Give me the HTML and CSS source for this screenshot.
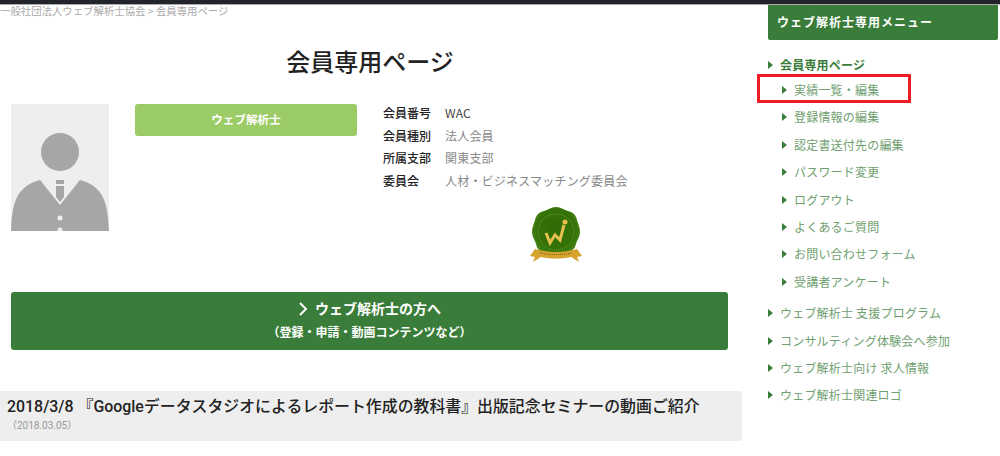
FILE: index.html
```html
<!DOCTYPE html>
<html lang="ja">
<head>
  <meta charset="UTF-8" />
  <title>会員専用ページ</title>
  <link rel="stylesheet" href="styles.css">
</head>
<body>
  <div class="topbar"></div>
  <div class="page">
    <div class="main">
      <p class="crumb">一般社団法人ウェブ解析士協会 &gt; 会員専用ページ</p>
      <h1>会員専用ページ</h1>

      <div class="profile">
        <svg class="photo" width="98" height="127" viewBox="0 0 98 127">
          <rect width="98" height="127" fill="#eeeeee"/>
          <circle cx="49" cy="48" r="19" fill="#a6a6a6"/>
          <path d="M0 127 C1 98 6 82 29 76 L49 101 L69 76 C92 82 97 98 98 127 Z" fill="#a6a6a6"/>
          <rect x="45" y="76" width="8" height="4" fill="#a6a6a6"/>
          <path d="M45 82 H53 V93 L49 98 L45 93 Z" fill="#a6a6a6"/>
          <circle cx="49" cy="114" r="2.500" fill="#eeeeee"/>
          <circle cx="49" cy="126" r="2.500" fill="#eeeeee"/>
        </svg>

        <div class="badge">ウェブ解析士</div>

        <div class="info">
          <table>
            <tr><th>会員番号</th><td>WAC</td></tr>
            <tr><th>会員種別</th><td>法人会員</td></tr>
            <tr><th>所属支部</th><td>関東支部</td></tr>
            <tr><th>委員会</th><td>人材・ビジネスマッチング委員会</td></tr>
          </table>
          <svg class="medal" width="54" height="56" viewBox="0 0 54 56">
            <defs>
              <radialGradient id="wax" cx="50%" cy="45%" r="55%">
                <stop offset="0" stop-color="#2f6a05"/>
                <stop offset="0.750" stop-color="#357308"/>
                <stop offset="1" stop-color="#4f8f1c"/>
              </radialGradient>
            </defs>
            <path d="M26 0 C31 0 34 3 38 4 C43 5 46 8 47 13 C48 17 50 20 50 25 C50 30 47 33 46 37 C45 42 41 45 36 46 C32 47 30 51 26 51 C22 51 19 47 15 46 C10 45 7 42 6 37 C5 33 2 30 2 25 C2 20 4 17 5 13 C6 8 9 5 14 4 C18 3 21 0 26 0 Z" fill="url(#wax)"/>
            <circle cx="26" cy="25" r="18" fill="none" stroke="#4c8a1a" stroke-width="1"/>
            <path d="M16 26 L20 36 L25 28 L30 33 L34 18" fill="none" stroke="#e6c04e" stroke-width="3"/>
            <circle cx="35" cy="15" r="2.500" fill="#e6c04e"/>
            <path d="M0 49 L5 42 C18 46 34 46 47 42 L52 49 L47 50 L49 55 L41 50 C30 52 22 52 11 50 L3 55 L5 50 Z" fill="#d6a32e"/>
            <path d="M10 46 C20 48 32 48 42 46" fill="none" stroke="#7a5a12" stroke-width="1" stroke-dasharray="1 1"/>
          </svg>
        </div>
      </div>

      <a class="bigbtn" href="#">
        <span class="bigbtn-title">
          <svg width="10" height="14" viewBox="0 0 10 14"><path d="M2 1 L8 7 L2 13" fill="none" stroke="#fff" stroke-width="2"/></svg>
          ウェブ解析士の方へ
        </span>
        <span class="bigbtn-sub">（登録・申請・動画コンテンツなど）</span>
      </a>

      <div class="news">
        <h2>2018/3/8 『Googleデータスタジオによるレポート作成の教科書』出版記念セミナーの動画ご紹介</h2>
        <p>（2018.03.05）</p>
      </div>
    </div>

    <div class="side">
      <div class="side-head">ウェブ解析士専用メニュー</div>
      <ul class="menu">
        <li class="current">会員専用ページ
          <ul class="submenu">
            <li class="marked">実績一覧・編集</li>
            <li>登録情報の編集</li>
            <li>認定書送付先の編集</li>
            <li>パスワード変更</li>
            <li>ログアウト</li>
            <li>よくあるご質問</li>
            <li>お問い合わせフォーム</li>
            <li>受講者アンケート</li>
          </ul>
        </li>
        <li>ウェブ解析士 支援プログラム</li>
        <li>コンサルティング体験会へ参加</li>
        <li>ウェブ解析士向け 求人情報</li>
        <li>ウェブ解析士関連ロゴ</li>
      </ul>
    </div>
  </div>
</body>
</html>
```

FILE: styles.css
```css
body {
  font-family: "Noto Sans CJK JP", "Liberation Sans", sans-serif;
  background-color: #fff;
  color: #222;
  margin: 0;
  padding: 0;
  height: 456px;
  overflow: hidden;
}
.topbar {
  height: 4px;
  background: #212529;
  border-bottom: 1px solid #aaa;
}
.page {
  display: flex;
}
.main {
  width: 742px;
}
.crumb {
  margin: 0;
  font-size: 10.400px;
  line-height: 12px;
  color: #aaa;
}
h1 {
  margin: 27px 0 0;
  padding-right: 2px;
  font-size: 24px;
  line-height: 34px;
  font-weight: 500;
  text-align: center;
}
.profile {
  display: flex;
  margin-top: 26px;
  padding-left: 11px;
  height: 188px;
}
.photo {
  display: block;
}
.badge {
  width: 222px;
  height: 32px;
  margin-left: 26px;
  background: #9ccc65;
  border-radius: 3px;
  color: #fff;
  font-size: 11.600px;
  font-weight: 700;
  line-height: 30px;
  text-align: center;
}
.info {
  margin-left: 26px;
  margin-top: -3px;
}
.info table {
  border-collapse: collapse;
  font-size: 12px;
}
.info th {
  width: 62px;
  padding: 0;
  height: 22.700px;
  text-align: left;
  font-weight: 500;
}
.info td {
  padding: 0;
  color: #888;
  letter-spacing: 0.200px;
}
.info tr:first-child td {
  color: #444;
}
.medal {
  display: block;
  margin: 15px 0 0 147px;
}
.bigbtn {
  display: block;
  width: 717px;
  height: 58px;
  margin-left: 11px;
  background: #3a7d3a;
  border-radius: 3px;
  color: #fff;
  text-align: center;
  text-decoration: none;
  font-weight: 700;
}
.bigbtn-title {
  display: block;
  padding-top: 6px;
  font-size: 14px;
  line-height: 20px;
}
.bigbtn-title svg {
  margin-right: 4px;
  vertical-align: -2px;
}
.bigbtn-sub {
  display: block;
  margin-top: 5px;
  font-size: 12px;
  line-height: 18px;
}
.news {
  height: 50px;
  margin-top: 41px;
  padding-left: 7px;
  background: #eeeeee;
}
.news h2 {
  margin: 0;
  padding-top: 5px;
  font-family: Roboto, "Noto Sans CJK JP", sans-serif;
  font-size: 15.900px;
  line-height: 21px;
  font-weight: 500;
}
.news p {
  margin: 2px 0 0;
  font-family: Roboto, "Noto Sans CJK JP", sans-serif;
  font-size: 10px;
  line-height: 14px;
  color: #999;
}
.side {
  margin-left: 26px;
  width: 230px;
}
.side-head {
  height: 35px;
  background: #3a7d3a;
  border-radius: 0 0 2px 2px;
  padding-left: 9px;
  color: #fff;
  font-size: 12px;
  font-weight: 700;
  line-height: 33px;
  letter-spacing: 1px;
}
.menu, .submenu {
  list-style: none;
  margin: 0;
  padding: 0;
}
.menu {
  margin-top: 16px;
  font-size: 12px;
  line-height: 18px;
  letter-spacing: 0.200px;
  color: #6fa070;
}
.menu > li {
  padding-left: 12px;
  margin-bottom: 9.300px;
  position: relative;
}
.menu li::before {
  content: "";
  position: absolute;
  left: 0;
  top: 5px;
  border-left: 5px solid #3a7d3a;
  border-top: 4px solid transparent;
  border-bottom: 4px solid transparent;
}
.menu > li.current {
  color: #3a7d3a;
  font-weight: 700;
  margin-bottom: 13.500px;
}
.submenu {
  margin-top: 7px;
  margin-left: 2px;
  font-weight: 400;
  color: #6fa070;
}
.submenu li {
  position: relative;
  padding-left: 12px;
  margin-bottom: 9.400px;
}
.marked::after {
  content: "";
  position: absolute;
  left: -25px;
  top: -7px;
  width: 148px;
  height: 23px;
  border: 3px solid #ee1c25;
}
```
